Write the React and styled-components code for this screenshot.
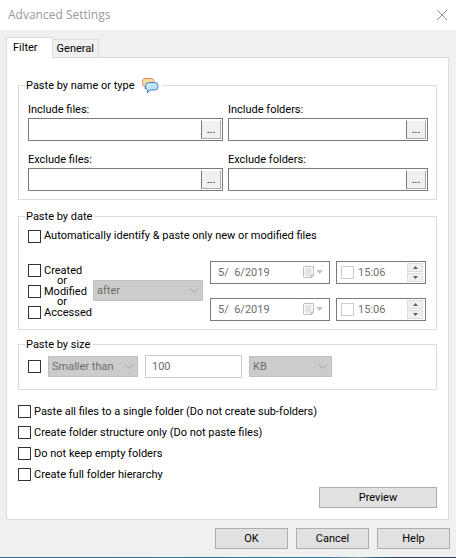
import React, { useState } from 'react';
import styled, { createGlobalStyle, css } from 'styled-components';

const palette = {
  face: '#f0f0f0',
  line: '#dcdcdc',
  field: '#7a7a7a',
  button: '#e1e1e1',
  buttonLine: '#adadad',
  disabled: '#cccccc',
  disabledLine: '#bfbfbf',
  disabledText: '#6d6d6d',
  title: '#999999',
};

const GlobalStyle = createGlobalStyle`
  * {
    box-sizing: border-box;
  }
  body {
    margin: 0;
    background: ${palette.face};
  }
  body, button, input, select {
    font-family: Roboto, Tahoma, sans-serif;
    font-size: 11px;
    line-height: 16px;
    color: #000;
  }
`;

const Dialog = styled.div`
  background: ${palette.face};
`;

const TitleBar = styled.header`
  display: flex;
  align-items: center;
  justify-content: space-between;
  height: 30px;
  padding: 0 8px;
  background: #fff;
  h1 {
    margin: 0;
    font-family: 'Open Sans', 'Segoe UI', sans-serif;
    font-size: 12px;
    font-weight: 400;
    color: ${palette.title};
  }
`;

const CloseButton = styled.button`
  display: flex;
  padding: 0;
  border: none;
  background: none;
`;

const TabList = styled.div`
  display: flex;
  align-items: flex-end;
  height: 27px;
  padding-left: 6px;
`;

const Tab = styled.button`
  min-width: 45px;
  height: 18px;
  padding: 0 4px;
  border: 1px solid ${palette.line};
  border-left: none;
  border-bottom: none;
  background: ${palette.face};
  ${props =>
    props.$active &&
    css`
      height: 21px;
      padding: 0 14px 0 6px;
      margin-bottom: -1px;
      border-left: 1px solid ${palette.line};
      background: #fff;
      position: relative;
    `}
`;

const Panel = styled.main`
  margin: 0 7px 0 6px;
  padding: 19px 11px 11px;
  border: 1px solid ${palette.line};
  background: #fff;
`;

const Group = styled.fieldset`
  min-width: 0;
  margin: ${props => props.$gap || 0}px 0 0;
  padding: 3px 8px 8px 9px;
  border: 1px solid ${palette.line};
`;

const Legend = styled.legend`
  display: flex;
  align-items: center;
  gap: 6px;
  height: 17px;
  margin-left: -3px;
  padding: 0 3px 0 1px;
`;

const PathGrid = styled.div`
  display: grid;
  grid-template-columns: 195fr 200fr;
  gap: 11px 5px;
  padding-top: 5px;
`;

const PathField = styled.div`
  min-width: 0;
  label {
    display: block;
    height: 16px;
  }
`;

const PathBox = styled.div`
  display: flex;
  height: 23px;
  padding: 1px;
  border: 1px solid ${palette.field};
  input {
    flex: 1;
    min-width: 0;
    padding: 0 4px;
    border: none;
    outline: none;
  }
`;

const BrowseButton = styled.button`
  width: 20px;
  padding: 0;
  border: 1px solid ${palette.buttonLine};
  border-left-color: ${palette.field};
  border-top-color: #fff;
  background: ${palette.face};
`;

const Check = styled.input.attrs({ type: 'checkbox' })`
  appearance: none;
  flex: none;
  width: 13px;
  height: 13px;
  margin: 0;
  border: 1px solid #333;
  background: #fff;
  &:checked {
    background: #333;
    box-shadow: inset 0 0 0 2px #fff;
  }
  &:disabled {
    border-color: ${palette.disabled};
  }
`;

const CheckLabel = styled.label`
  display: flex;
  align-items: center;
  gap: 3px;
  height: ${props => props.$height}px;
  white-space: nowrap;
`;

const DateRow = styled.div`
  display: flex;
  align-items: flex-start;
  margin: 17px 2px 0 0;
`;

const DateKinds = styled.div`
  width: 65px;
  padding-top: 3px;
`;

const Or = styled.div`
  padding-left: 29px;
  line-height: 8px;
`;

const SelectWrap = styled.div`
  position: relative;
  display: flex;
  flex: ${props => props.$flex || 'none'};
  width: ${props => props.$width}px;
  margin: ${props => props.$margin || 0};
  select {
    appearance: none;
    width: 100%;
    height: 21px;
    padding: 0 20px 0 3px;
    border: 1px solid ${palette.disabledLine};
    border-radius: 0;
    background: ${palette.disabled};
    color: ${palette.disabledText};
    opacity: 1;
  }
  svg {
    position: absolute;
    top: 8px;
    right: 4px;
    pointer-events: none;
  }
`;

const DateFields = styled.div`
  display: grid;
  flex: 216 1 0;
  grid-template-columns: 120fr 90fr;
  gap: 14px 6px;
`;

const DateBox = styled.div`
  display: flex;
  align-items: center;
  gap: 4px;
  min-width: 0;
  height: 23px;
  padding: 0 2px 0 ${props => props.$left}px;
  border: 1px solid ${palette.field};
`;

const PlainInput = styled.input`
  flex: 1;
  width: 0;
  min-width: 0;
  padding: 0;
  border: none;
  background: none;
  color: ${palette.disabledText};
`;

const CalendarButton = styled.button`
  display: flex;
  margin-right: 3px;
  padding: 0;
  border: none;
  background: none;
`;

const Spinner = styled.div`
  display: grid;
  gap: 1px;
  width: 16px;
  button {
    display: flex;
    align-items: center;
    justify-content: center;
    height: 9px;
    padding: 0;
    border: 1px solid ${palette.line};
    background: ${palette.face};
  }
`;

const SizeRow = styled.div`
  display: flex;
  align-items: center;
  gap: 7px;
  height: 21px;
  margin-bottom: 4px;
`;

const SizeInput = styled.input`
  width: 97px;
  height: 23px;
  padding: 0 6px;
  border: 1px solid ${palette.disabled};
  background: #fff;
  color: ${palette.disabledText};
`;

const Options = styled.div`
  margin-top: 11px;
`;

const Button = styled.button`
  width: ${props => props.$width || 73}px;
  height: 21px;
  padding: 0;
  border: 1px solid ${palette.buttonLine};
  background: ${palette.button};
`;

const PanelActions = styled.div`
  display: flex;
  justify-content: flex-end;
  margin-top: 2px;
`;

const Footer = styled.footer`
  display: flex;
  justify-content: flex-end;
  gap: 8px;
  padding: 8px 6px;
`;

const BottomEdge = styled.div`
  height: 1px;
  background: linear-gradient(90deg, #2b6a94 0, #2f78a5 72%, #8a989c 79%, #27628c 82%, #2d3f58 88%);
`;

const CloseIcon = () => (
  <svg width="12" height="12" viewBox="0 0 12 12" aria-hidden="true">
    <path d="M1 1L11 11M11 1L1 11" stroke="#8f8f8f" fill="none" />
  </svg>
);

const ChatIcon = () => (
  <svg width="18" height="17" viewBox="0 0 18 17" aria-hidden="true">
    <path
      d="M4 1.5h6q3 0 3 3v2q0 3-3 3H6.500L4 12V9.500Q1.500 9 1.500 6.500v-2q0-3 2.500-3z"
      fill="#fddda3"
      stroke="#ee8660"
    />
    <path
      d="M8.500 5.500h5q3.500 0 3.500 3v1.500q0 3-3.500 3L9 13l-2.500 3 .2-3Q4.500 12.500 4.500 10V8.500q0-3 4-3z"
      fill="#bce3fc"
      stroke="#3f85c0"
    />
    <path d="M7 8.500q1-1 3-1h3" stroke="#e4f5ff" fill="none" />
  </svg>
);

const Chevron = () => (
  <svg width="10" height="6" viewBox="0 0 10 6" aria-hidden="true">
    <path d="M1 .5L5 4.500L9 .5" stroke="#a3a3a3" fill="none" />
  </svg>
);

const CalendarIcon = () => (
  <svg width="21" height="13" viewBox="0 0 21 13" aria-hidden="true">
    <path d="M1.500 .5h9v8.500l-2.500 2.500h-6.500q-1 0-1-1v-9q0-1 1-1z" fill="#fafafa" stroke="#bebebe" />
    <path d="M11 9L8 12V9z" fill="#cfcfcf" stroke="#bebebe" />
    <path
      d="M2.500 3h6M2.500 5h6M2.500 7h6M2.500 9h4M3 2.500v7M5 2.500v7M7 2.500v7"
      stroke="#d9dbe2"
      fill="none"
    />
    <path d="M13 4h7l-3.500 4z" fill="#c3c3bd" />
  </svg>
);

const Arrow = ({ down }) => (
  <svg width="5" height="3" viewBox="0 0 5 3" aria-hidden="true">
    <path d={down ? 'M0 0h5L2.500 3z' : 'M0 3h5L2.500 0z'} fill="#606060" />
  </svg>
);

const PathInput = ({ id, label }) => (
  <PathField>
    <label htmlFor={id}>{label}</label>
    <PathBox>
      <input id={id} type="text" />
      <BrowseButton type="button" aria-label={`Browse ${label}`}>
        ...
      </BrowseButton>
    </PathBox>
  </PathField>
);

const CheckItem = ({ height = 21, children }) => (
  <CheckLabel $height={height}>
    <Check />
    {children}
  </CheckLabel>
);

const Select = ({ label, options, ...rest }) => (
  <SelectWrap {...rest}>
    <select disabled aria-label={label}>
      {options.map(option => (
        <option key={option}>{option}</option>
      ))}
    </select>
    <Chevron />
  </SelectWrap>
);

const DateTime = ({ name }) => (
  <>
    <DateBox $left={7}>
      <PlainInput disabled aria-label={`${name} date`} defaultValue="5/  6/2019" />
      <CalendarButton type="button" disabled aria-label="Open calendar">
        <CalendarIcon />
      </CalendarButton>
    </DateBox>
    <DateBox $left={4}>
      <Check disabled aria-label={`Use ${name} time`} />
      <PlainInput disabled aria-label={`${name} time`} defaultValue="15:06" />
      <Spinner>
        <button type="button" disabled aria-label="Later">
          <Arrow />
        </button>
        <button type="button" disabled aria-label="Earlier">
          <Arrow down />
        </button>
      </Spinner>
    </DateBox>
  </>
);

const App = () => {
  const [tab, setTab] = useState('Filter');

  return (
    <Dialog role="dialog" aria-labelledby="title">
      <GlobalStyle />
      <TitleBar>
        <h1 id="title">Advanced Settings</h1>
        <CloseButton type="button" aria-label="Close">
          <CloseIcon />
        </CloseButton>
      </TitleBar>
      <TabList role="tablist">
        {['Filter', 'General'].map(name => (
          <Tab
            key={name}
            type="button"
            role="tab"
            aria-selected={tab === name}
            $active={tab === name}
            onClick={() => setTab(name)}
          >
            {name}
          </Tab>
        ))}
      </TabList>
      <Panel>
        <Group>
          <Legend>
            Paste by name or type
            <ChatIcon />
          </Legend>
          <PathGrid>
            <PathInput id="include-files" label="Include files:" />
            <PathInput id="include-folders" label="Include folders:" />
            <PathInput id="exclude-files" label="Exclude files:" />
            <PathInput id="exclude-folders" label="Exclude folders:" />
          </PathGrid>
        </Group>
        <Group $gap={8}>
          <Legend>Paste by date</Legend>
          <CheckItem height={16}>Automatically identify &amp; paste only new or modified files</CheckItem>
          <DateRow>
            <DateKinds>
              <CheckItem height={13}>Created</CheckItem>
              <Or>or</Or>
              <CheckItem height={13}>Modified</CheckItem>
              <Or>or</Or>
              <CheckItem height={13}>Accessed</CheckItem>
            </DateKinds>
            <Select $flex="110 1 0" $margin="19px 7px 0 0" label="Date condition" options={['after', 'before', 'between']} />
            <DateFields>
              <DateTime name="First" />
              <DateTime name="Second" />
            </DateFields>
          </DateRow>
        </Group>
        <Group $gap={6}>
          <Legend>Paste by size</Legend>
          <SizeRow>
            <Check aria-label="Paste by size" />
            <Select $width={90} label="Size condition" options={['Smaller than', 'Larger than']} />
            <SizeInput disabled aria-label="Size" defaultValue="100" />
            <Select $width={83} label="Unit" options={['KB', 'MB', 'GB']} />
          </SizeRow>
        </Group>
        <Options>
          <CheckItem>Paste all files to a single folder (Do not create sub-folders)</CheckItem>
          <CheckItem>Create folder structure only (Do not paste files)</CheckItem>
          <CheckItem>Do not keep empty folders</CheckItem>
          <CheckItem>Create full folder hierarchy</CheckItem>
        </Options>
        <PanelActions>
          <Button type="button" $width={118}>Preview</Button>
        </PanelActions>
      </Panel>
      <Footer>
        <Button type="button">OK</Button>
        <Button type="button">Cancel</Button>
        <Button type="button">Help</Button>
      </Footer>
      <BottomEdge />
    </Dialog>
  );
};

export default App;
